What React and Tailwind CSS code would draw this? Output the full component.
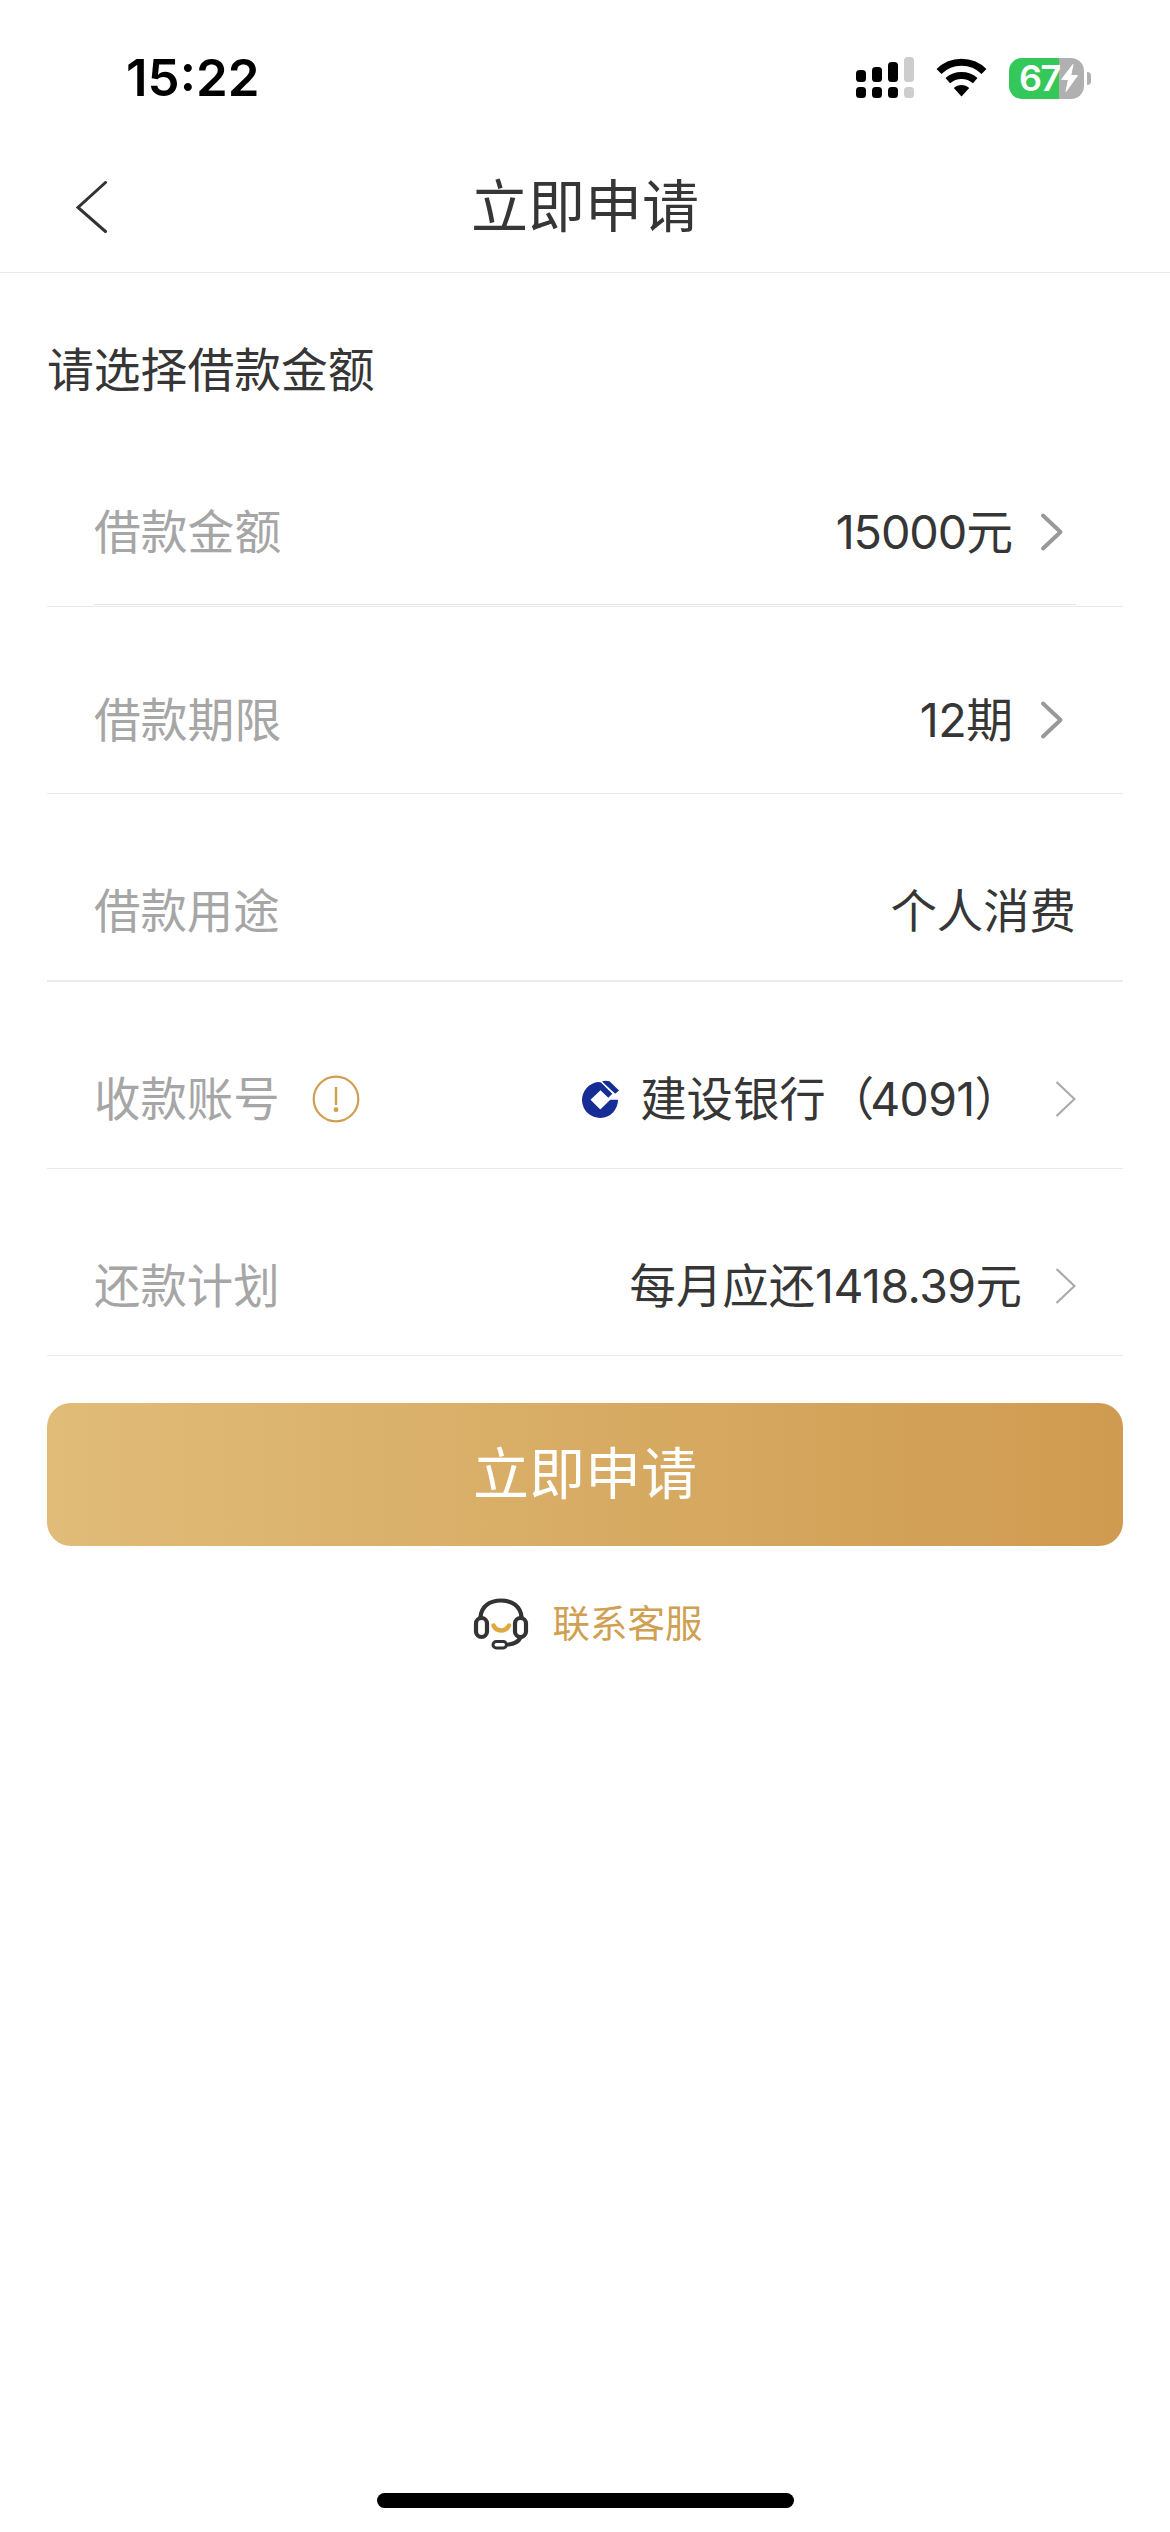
import React from 'react';

const StatusBar = () => (
  <div className="flex h-[142px] items-start justify-between pl-[126px] pr-[79px]">
    <div className="mt-[47px] font-['Inter'] text-[51px] font-semibold leading-[62px] text-black">15:22</div>
    <div className="mt-[56px] flex items-center">
      {/* Signal */}
      <svg width="60" height="44" viewBox="0 0 60 44">
        <g fill="#000">
          <rect x="0" y="14" width="10" height="12" rx="3.5" />
          <rect x="16" y="11" width="10" height="15" rx="3.5" />
          <rect x="32" y="6" width="10" height="20" rx="3.5" />
          <rect x="0" y="31" width="10" height="11" rx="3.5" />
          <rect x="16" y="31" width="10" height="11" rx="3.5" />
          <rect x="32" y="31" width="10" height="11" rx="3.5" />
        </g>
        <g fill="#cdcdcd">
          <rect x="48" y="1" width="10" height="25" rx="3.5" />
          <rect x="48" y="31" width="10" height="11" rx="3.5" />
        </g>
      </svg>
      {/* Wifi */}
      <svg className="ml-[20px]" width="51" height="44" viewBox="0 0 51 44">
        <g fill="none" stroke="#000" strokeWidth="7">
          <path d="M3 15.5a32 32 0 0 1 45 0" />
          <path d="M11.8 24.7a21 21 0 0 1 27.4 0" />
        </g>
        <path d="M25.5 40.5l-7.7-8.4a11 11 0 0 1 15.4 0z" fill="#000" />
      </svg>
      {/* Battery */}
      <div className="ml-[22px] flex items-center">
        <div className="flex h-[41px] w-[75px] items-center rounded-[13px] bg-gradient-to-r from-[#34c759] from-67% to-[#b0b0b0] to-67% pl-[10px]">
          <span className="w-[41px] font-['Inter'] text-[36px] font-semibold leading-[41px] tracking-[-1.5px] text-white">67</span>
          <svg width="19" height="30" viewBox="0 0 19 30">
            <path d="M13 1.5L1.5 16.5h7L6 28.500 17.500 12.500h-6.800z" fill="#fff" stroke="#fff" strokeWidth="1" strokeLinejoin="round" />
          </svg>
        </div>
        <div className="ml-[3px] h-[13px] w-[4px] rounded-r-full bg-[#b0b0b0]" />
      </div>
    </div>
  </div>
);

const Header = () => (
  <div className="flex h-[131px] items-center border-b border-[#ebebeb] pl-[76px] pr-[107px]">
    <svg width="31" height="52" viewBox="0 0 31 52" fill="none" stroke="#333" strokeWidth="3" strokeLinecap="round">
      <path d="M29.5 1.5L2 26.5l27.5 24" />
    </svg>
    <h1 className="flex-1 text-center text-[57px] leading-[64px]">立即申请</h1>
  </div>
);

const BoldChevron = () => (
  <svg className="ml-[27px] mr-[12px]" width="24" height="40" viewBox="0 0 24 40" fill="none" stroke="#999" strokeWidth="4" strokeLinecap="round" strokeLinejoin="round">
    <path d="M3 3.5l17.5 16.5L3 36.5" />
  </svg>
);

const ThinChevron = () => (
  <svg width="21" height="36" viewBox="0 0 21 36" fill="none" stroke="#aaa" strokeWidth="2.2">
    <path d="M1.5 1l18 17-18 17" />
  </svg>
);

const InfoIcon = () => (
  <svg className="ml-[31px]" width="50" height="50" viewBox="0 0 50 50">
    <circle cx="25" cy="25" r="22.3" fill="none" stroke="#cf9f50" strokeWidth="2.2" />
    <path d="M25 13v18" stroke="#cf9f50" strokeWidth="2.4" />
    <circle cx="25" cy="35.7" r="2.4" fill="#cf9f50" />
  </svg>
);

const BankLogo = () => (
  <svg width="38" height="38" viewBox="0 0 38 38" fill="#172d96">
    <path d="M17.5 2A18 18 0 1 0 37 19.800H29.300L19.300 29.500 9.500 19.700l10-9.500 7.800 7.600 4-4L20 2.500z" />
    <path d="M21 1.500C23 .5 26 .5 28.500 1.300L38 10.500 34.200 13.800z" />
  </svg>
);

const Row = ({ label, info, className, children }) => (
  <div className={`flex items-center justify-between ${className}`}>
    <div className="flex items-center text-[#a6a6a6]">
      <span>{label}</span>
      {info && <InfoIcon />}
    </div>
    <div className="flex items-center">{children}</div>
  </div>
);

const App = () => {
  return (
    <div className="flex h-[2532px] w-[1170px] flex-col bg-white font-['Inter','Noto_Sans_CJK_SC',sans-serif] text-[#363636]">
      <StatusBar />
      <Header />

      <div className="flex flex-col px-[47px] text-[46.8px] leading-[56px]">
        <h2 className="mt-[69px]">请选择借款金额</h2>

        <div className="mt-[61px] border-b border-[#ebebeb]">
          <Row label="借款金额" className="mx-[47px] h-[146px] border-b border-[#e4e4e4] pt-px">
            <span>
              <span className="tracking-[-1.1px]">15000</span>元
            </span>
            <BoldChevron />
          </Row>
          <div className="h-px" />
        </div>
        <Row label="借款期限" className="mt-[36px] h-[151px] border-b border-[#ebebeb] px-[47px] pt-[3px]">
          <span>
            <span className="tracking-[-0.6px]">12</span>期
          </span>
          <BoldChevron />
        </Row>
      </div>

      <div className="flex flex-col px-[47px] text-[46.4px] leading-[56px]">
        <Row label="借款用途" className="mt-[46px] h-[142px] border-b-2 border-[#ebebeb] px-[47px] pt-[2px]">
          <span>个人消费</span>
        </Row>
        <Row label="收款账号" info className="mt-[46px] h-[141px] border-b border-[#ebebeb] px-[47px] pt-px">
          <BankLogo />
          <span className="ml-[21px] mr-[34px]">
            建设银行
            <span className="ml-[2px] tracking-[-4px]">（</span>
            <span className="tracking-[-0.6px]">4091</span>）
          </span>
          <ThinChevron />
        </Row>
        <Row label="还款计划" className="mt-[46px] h-[141px] border-b border-[#ebebeb] px-[47px] pt-px">
          <span className="mr-[33px]">
            每月应还<span className="tracking-[-0.5px]">1418.39</span>元
          </span>
          <ThinChevron />
        </Row>

        <button
          type="button"
          className="mt-[47px] h-[143px] rounded-[24px] bg-gradient-to-r from-[#e0bc78] to-[#cf9b50] pb-[2px] text-[56px] text-white"
        >
          立即申请
        </button>
      </div>

      {/* Customer service */}
      <div className="mt-[50px] flex items-center justify-center gap-[24px] pl-[5px] text-[37.5px] leading-[56px] text-[#cfa052]">
        <svg width="56" height="54" viewBox="0 0 56 54" fill="none" stroke="#333" strokeWidth="4.2" strokeLinecap="round">
          <path d="M7.500 20C8.500 9 17 3.500 28 3.500S47.500 9 48.500 20" />
          <rect x="3" y="21" width="11" height="19" rx="5.500" />
          <rect x="42" y="21" width="11" height="19" rx="5.500" />
          <path d="M47.500 40.500c-2 4-6 6.500-12 7" />
          <rect x="20" y="44.500" width="13.500" height="6.500" rx="3.250" strokeWidth="3" />
          <path d="M20.500 28.500c3 6.500 12 6.500 15.500 0" stroke="#e0a93f" strokeWidth="4.500" />
        </svg>
        <span>联系客服</span>
      </div>

      <div className="mx-auto mb-[24px] mt-auto h-[15px] w-[417px] rounded-full bg-black" />
    </div>
  );
};

export default App;
